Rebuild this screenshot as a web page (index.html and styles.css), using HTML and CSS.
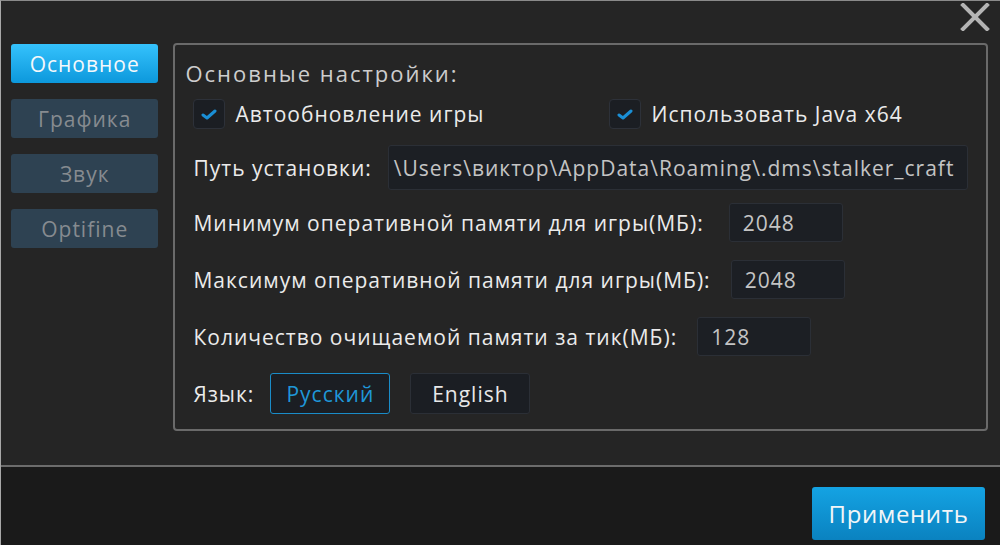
FILE: index.html
```html
<!DOCTYPE html>
<html lang="ru">
<head>
<meta charset="utf-8">
<link rel="stylesheet" href="styles.css">
</head>
<body>
<div class="window">
  <button class="close" aria-label="Закрыть">
    <svg width="30" height="28" viewBox="0 0 30 28"><path d="M3 2 L27 26 M27 2 L3 26" stroke="#b4b4b4" stroke-width="4" stroke-linecap="square"/></svg>
  </button>
  <div class="main">
    <nav class="nav">
      <div class="tab active">Основное</div>
      <div class="tab">Графика</div>
      <div class="tab">Звук</div>
      <div class="tab">Optifine</div>
    </nav>
    <section class="panel">
      <div class="title">Основные настройки:</div>
      <div class="row checks">
        <label class="check first"><span class="box"><svg width="16" height="12" viewBox="0 0 16 12"><path d="M2 7 L6 10 L14 3" stroke="#1a8fd6" stroke-width="3" fill="none" stroke-linecap="round" stroke-linejoin="round"/></svg></span>Автообновление игры</label>
        <label class="check"><span class="box"><svg width="16" height="12" viewBox="0 0 16 12"><path d="M2 7 L6 10 L14 3" stroke="#1a8fd6" stroke-width="3" fill="none" stroke-linecap="round" stroke-linejoin="round"/></svg></span>Использовать Java x64</label>
      </div>
      <div class="row path">
        <span class="label">Путь установки:</span>
        <div class="field wide">\Users\виктор\AppData\Roaming\.dms\stalker_craft</div>
      </div>
      <div class="row mem r1">
        <span class="label">Минимум оперативной памяти для игры(МБ):</span>
        <div class="field num">2048</div>
      </div>
      <div class="row mem r2">
        <span class="label">Максимум оперативной памяти для игры(МБ):</span>
        <div class="field num">2048</div>
      </div>
      <div class="row mem r3">
        <span class="label">Количество очищаемой памяти за тик(МБ):</span>
        <div class="field num">128</div>
      </div>
      <div class="row lang">
        <span class="label">Язык:</span>
        <div class="langbtn sel">Русский</div>
        <div class="langbtn">English</div>
      </div>
    </section>
  </div>
  <footer class="footer">
    <button class="apply">Применить</button>
  </footer>
</div>
</body>
</html>
```

FILE: styles.css
```css
html, body {
  margin: 0;
  padding: 0;
  background: #1b1b1b;
}
body {
  width: 1000px;
  height: 545px;
  overflow: hidden;
  font-family: "Open Sans", "Noto Sans", sans-serif;
  color: #ebebeb;
}
.window {
  position: relative;
  width: 999px;
  height: 544px;
  border-left: 1px solid #a8a8a8;
  border-top: 1px solid #8a8a8a;
  display: flex;
  flex-direction: column;
}
.close {
  position: absolute;
  top: 2px;
  right: 10px;
  background: none;
  border: 0;
  padding: 0;
  width: 30px;
  height: 28px;
}
.main {
  height: 422px;
  background: #252525;
  padding: 42px 12px 0 10px;
  display: flex;
  gap: 15px;
  border-bottom: 2px solid #6c6c6c;
}
.nav {
  width: 149px;
  display: flex;
  flex-direction: column;
  gap: 16px;
  padding-top: 1px;
}
.tab {
  height: 39px;
  border-radius: 3px;
  background: #2e4252;
  color: #868b90;
  font-size: 21px;
  letter-spacing: 1px;
  display: flex;
  align-items: center;
  justify-content: center;
}
.tab.active {
  background: linear-gradient(#35c2fc, #0c98dc);
  color: #f4f8fb;
}
.panel {
  width: 809px;
  height: 384px;
  border: 2px solid #6a6a6a;
  border-radius: 4px;
  padding: 0 0 0 10px;
  box-sizing: content-box;
  display: flex;
  flex-direction: column;
}
.title {
  font-size: 22px;
  letter-spacing: 2px;
  color: #cdcdcd;
  height: 28px;
  margin-top: 14px;
  line-height: 28px;
}
.row {
  display: flex;
  align-items: center;
  margin-left: 8px;
  font-size: 21px;
  letter-spacing: 1px;
}
.checks {
  margin-top: 12px;
  height: 30px;
}
.check {
  display: flex;
  align-items: center;
  gap: 10px;
}
.check.first {
  width: 416px;
}
.box {
  width: 30px;
  height: 28px;
  border: 1px solid #2d3139;
  border-radius: 4px;
  background: #1b1e23;
  display: flex;
  align-items: center;
  justify-content: center;
}
.label {
  white-space: nowrap;
}
.field {
  box-sizing: border-box;
  background: #1c1f24;
  border: 1px solid #2b2f36;
  border-radius: 3px;
  color: #c4c4c4;
  display: flex;
  align-items: center;
  white-space: nowrap;
  overflow: hidden;
}
.path {
  margin-top: 16px;
  gap: 16px;
}
.field.wide {
  width: 580px;
  height: 45px;
  padding-left: 5px;
}
.mem {
  gap: 20px;
}
.r1 { margin-top: 13px; gap: 25px; }
.r2 { margin-top: 18px; }
.r3 { margin-top: 18px; }
.field.num {
  width: 114px;
  height: 39px;
  padding-left: 13px;
}
.lang {
  margin-top: 17px;
  gap: 16px;
}
.langbtn {
  box-sizing: border-box;
  width: 120px;
  height: 41px;
  border: 1px solid #2b2f36;
  border-radius: 3px;
  background: #1b1e23;
  display: flex;
  align-items: center;
  justify-content: center;
  color: #e8e8e8;
}
.langbtn.sel {
  border-color: #1a8cc8;
  color: #1f97d8;
  margin-right: 4px;
}
.footer {
  flex: 1;
  background: #1a1a1a;
  display: flex;
  justify-content: flex-end;
  align-items: flex-start;
  padding: 20px 15px 0 0;
}
.apply {
  width: 173px;
  height: 53px;
  border: 0;
  border-radius: 3px;
  background: linear-gradient(#14a3e3, #0a82c0);
  color: #f2f6f8;
  font-family: "Open Sans", "Noto Sans", sans-serif;
  font-size: 24px;
  letter-spacing: 0.6px;
  padding: 0;
}
```
